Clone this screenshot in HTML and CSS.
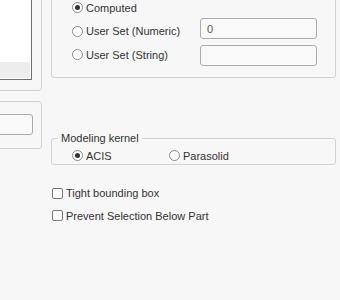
FILE: index.html
```html
<!DOCTYPE html>
<html lang="en">
<head>
  <meta charset="UTF-8">
  <title>Part Properties</title>
  <link rel="stylesheet" href="styles.css">
</head>
<body>
<div class="dialog">
  <!-- left column, cut off by the window edge -->
  <div class="left">
    <div class="group list-group">
      <div class="listbox">
        <div class="list-body"></div>
        <div class="list-scroll"></div>
      </div>
    </div>
    <div class="group field-group">
      <input type="text" class="textbox">
    </div>
  </div>

  <div class="right">
    <div class="group value-group">
      <div class="radios">
        <label class="row"><input type="radio" name="value" checked> Computed</label>
        <label class="row"><input type="radio" name="value"> User Set (Numeric)</label>
        <label class="row"><input type="radio" name="value"> User Set (String)</label>
      </div>
      <div class="fields">
        <input type="text" class="textbox" value="0">
        <input type="text" class="textbox">
      </div>
    </div>

    <fieldset class="kernel">
      <legend>Modeling kernel</legend>
      <label class="opt acis"><input type="radio" name="kernel" checked> ACIS</label>
      <label class="opt"><input type="radio" name="kernel"> Parasolid</label>
    </fieldset>

    <div class="checks">
      <label class="check"><input type="checkbox"> Tight bounding box</label>
      <label class="check"><input type="checkbox"> Prevent Selection Below Part</label>
    </div>
  </div>
</div>
</body>
</html>
```

FILE: styles.css
```css
body {
  margin: 0;
  padding: 0;
  background-color: #F7F7F7;
  font-family: "Liberation Sans", Arial, sans-serif;
  font-size: 11px;
  color: #333;
  overflow: hidden;
}

.dialog {
  display: flex;
  align-items: flex-start;
}

.left {
  width: 242px;
  margin-left: -200px;
  flex: none;
}

.right {
  width: 285px;
  margin-left: 9px;
  flex: none;
}

.group {
  border: 1px solid #D2D2D2;
  border-radius: 3px;
}

/* left: list box */
.list-group {
  margin-top: -30px;
  padding: 5px 9px 10px 10px;
}

.listbox {
  height: 104px;
  box-sizing: border-box;
  border: 1px solid #6E6E6E;
  padding: 1px;
  background-color: #FFF;
  display: flex;
  flex-direction: column;
}

.list-body {
  flex: 1;
}

.list-scroll {
  height: 16px;
  background-color: #EDEDED;
}

.field-group {
  margin-top: 10px;
  padding: 12px 8px 13px 10px;
}

.textbox {
  display: block;
  box-sizing: border-box;
  width: 100%;
  height: 21px;
  margin: 0;
  padding: 0 6px;
  border: 1px solid #ABABAB;
  border-radius: 3px;
  background-color: #F9F9F9;
  font-family: inherit;
  font-size: 11px;
  color: #555;
  outline: none;
}

/* right: value source */
.value-group {
  margin-top: -20px;
  padding: 15px 18px 10.5px 20px;
  display: flex;
  align-items: flex-start;
}

.radios {
  width: 128px;
  flex: none;
}

.row {
  display: flex;
  align-items: center;
  height: 23.5px;
  white-space: nowrap;
}

.fields {
  width: 117px;
  margin-top: 22px;
  display: flex;
  flex-direction: column;
  gap: 6px;
}

input[type="radio"] {
  appearance: none;
  width: 11px;
  height: 11px;
  margin: 0 3px 0 0;
  border: 1px solid #8A8A8A;
  border-radius: 50%;
  background-color: #FFF;
  box-sizing: border-box;
  flex: none;
  display: grid;
  place-content: center;
}

input[type="radio"]:checked::before {
  content: "";
  width: 5px;
  height: 5px;
  border-radius: 50%;
  background-color: #333;
}

/* modeling kernel */
.kernel {
  margin: 54px 0 0 0;
  padding: 3px 0 1px 0;
  border: 1px solid #D2D2D2;
  border-radius: 3px;
  display: flex;
}

.kernel legend {
  padding: 0 3px;
  margin-left: 6px;
  line-height: 13px;
}

.opt {
  display: flex;
  align-items: center;
  height: 15px;
}

.acis {
  width: 97px;
  margin-left: 20px;
}

/* options */
.checks {
  margin-top: 17px;
  padding-left: 1px;
}

.check {
  display: flex;
  align-items: center;
  height: 22.5px;
}

input[type="checkbox"] {
  appearance: none;
  width: 11px;
  height: 11px;
  margin: 0 3px 0 0;
  border: 1px solid #7A7A7A;
  border-radius: 2px;
  background-color: #FFF;
  box-sizing: border-box;
  flex: none;
}
```
